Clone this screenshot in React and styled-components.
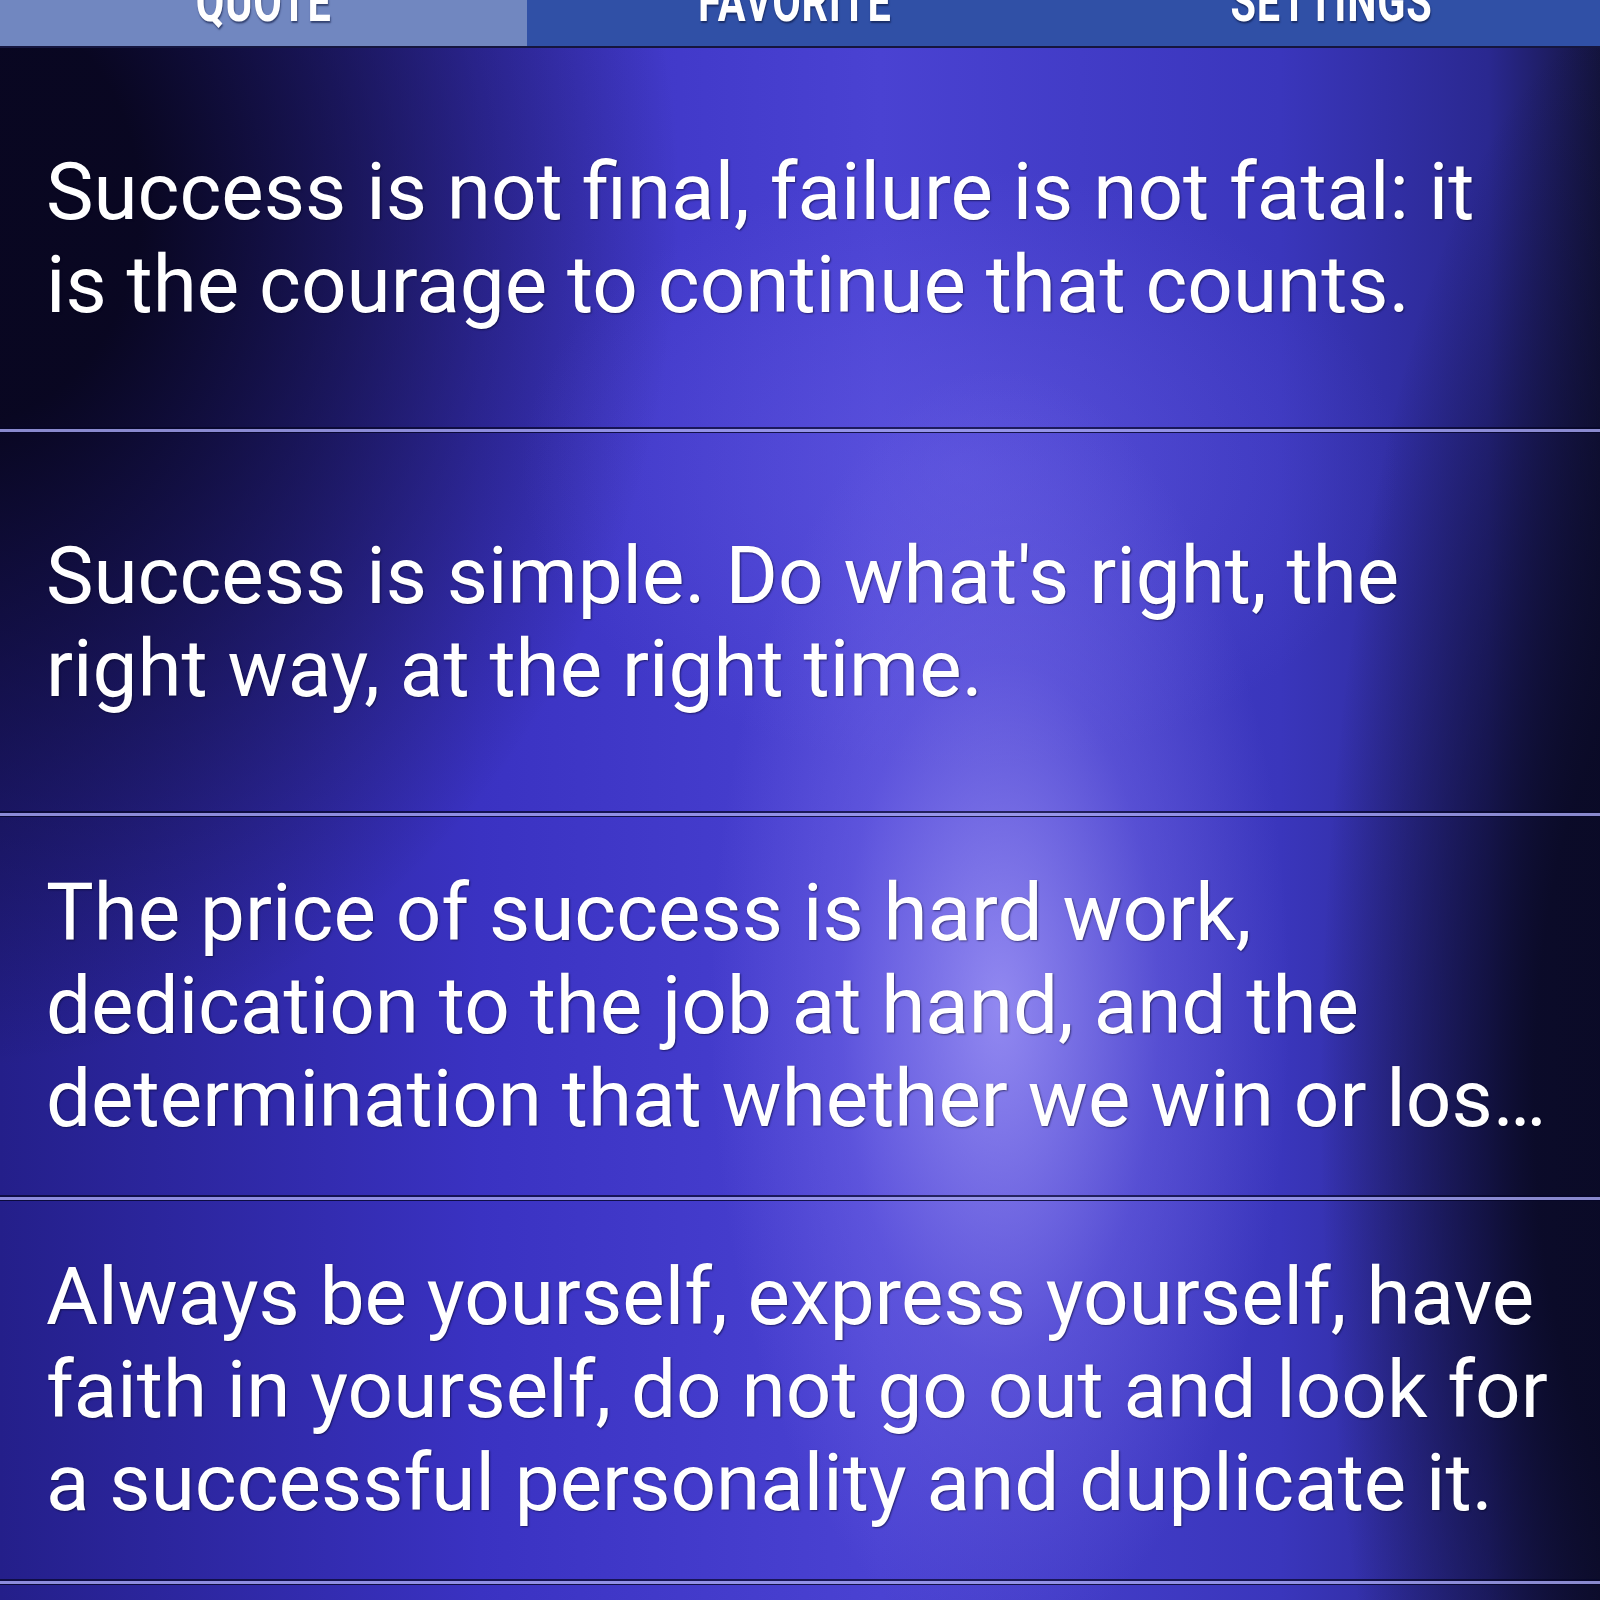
import React from 'react'
import styled, { createGlobalStyle } from 'styled-components'

const GlobalStyle = createGlobalStyle`
  html, body {
    margin: 0;
    padding: 0;
    background: #0c0b2a;
  }
  body {
    width: 1600px;
    height: 1600px;
    overflow: hidden;
    font-family: Roboto, "Noto Sans", sans-serif;
  }
`

const Screen = styled.div`
  width: 1600px;
  height: 1600px;
  display: flex;
  flex-direction: column;
  overflow: hidden;
`

const TabBar = styled.div`
  display: grid;
  grid-template-columns: 527px 1fr 1fr;
  height: 46px;
  flex-shrink: 0;
  border-bottom: 2px solid #15163f;
  background: #3050a6;
`

const Tab = styled.div`
  display: flex;
  justify-content: center;
  align-items: flex-start;
  overflow: hidden;
  background: ${p => (p.active ? '#7187c0' : '#3050a6')};
`

const TabLabel = styled.span`
  margin-top: -26px;
  font-family: Roboto, "DejaVu Sans Condensed", sans-serif;
  font-weight: 700;
  font-size: 56px;
  line-height: 56px;
  color: #fff;
  letter-spacing: 1px;
  transform: scaleX(0.74);
  text-shadow: 1px 2px 2px rgba(10, 20, 60, 0.6);
`

const List = styled.div`
  flex: 1;
  display: flex;
  flex-direction: column;
  background:
    radial-gradient(ellipse 290px 640px at 1000px 960px, rgba(175, 165, 255, 0.72), rgba(130, 118, 240, 0.35) 55%, rgba(100, 90, 230, 0) 100%),
    radial-gradient(ellipse 440px 300px at 960px 420px, rgba(110, 100, 235, 0.45), rgba(110, 100, 235, 0) 100%),
    radial-gradient(ellipse 720px 860px at -40px 160px, rgba(8, 6, 30, 0.97) 25%, rgba(8, 6, 30, 0) 100%),
    radial-gradient(ellipse 330px 1100px at 1650px 1050px, rgba(10, 10, 38, 0.95) 35%, rgba(10, 10, 38, 0) 100%),
    linear-gradient(to right, #241f8a 0%, #3a32c2 30%, #4a42d2 55%, #3a36bc 80%, #2a2890 93%, #14143e 100%);
`

const Row = styled.div`
  height: 381px;
  flex-shrink: 0;
  display: flex;
  flex-direction: column;
  justify-content: center;
  padding: 0 20px 0 46px;
  border-bottom: 3px solid rgba(160, 160, 235, 0.85);
  box-shadow: 0 1px 0 rgba(5, 5, 40, 0.8), inset 0 -2px 0 rgba(5, 5, 40, 0.7);
`

const Line = styled.span`
  display: block;
  white-space: nowrap;
  font-size: 80px;
  line-height: 93px;
  color: #fff;
  text-shadow: 1px 1px 2px rgba(0, 0, 30, 0.55);
`

const tabs = ['QUOTE', 'FAVORITE', 'SETTINGS']

const quotes = [
  ['Success is not final, failure is not fatal: it', 'is the courage to continue that counts.'],
  ["Success is simple. Do what's right, the", 'right way, at the right time.'],
  [
    'The price of success is hard work,',
    'dedication to the job at hand, and the',
    'determination that whether we win or los\u2026',
  ],
  [
    'Always be yourself, express yourself, have',
    'faith in yourself, do not go out and look for',
    'a successful personality and duplicate it.',
  ],
]

const App = () => (
  <Screen>
    <GlobalStyle />
    <TabBar>
      {tabs.map((t, i) => (
        <Tab key={t} active={i === 0}>
          <TabLabel>{t}</TabLabel>
        </Tab>
      ))}
    </TabBar>
    <List>
      {quotes.map((lines, i) => (
        <Row key={i}>
          {lines.map(l => (
            <Line key={l}>{l}</Line>
          ))}
        </Row>
      ))}
      <Row />
    </List>
  </Screen>
)

export default App
